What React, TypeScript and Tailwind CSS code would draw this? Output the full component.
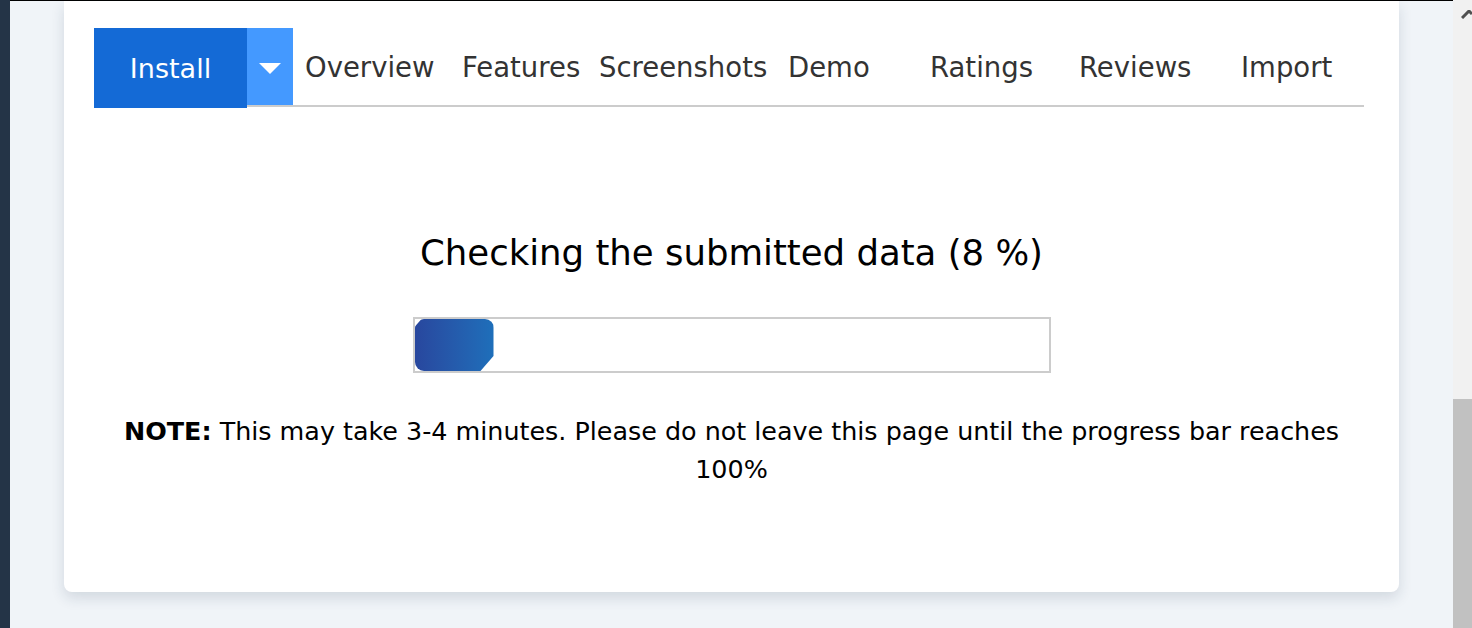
import { useState } from "react";

const tabs = [
  { label: "Overview", w: "w-[157px]" },
  { label: "Features", w: "w-[137px]" },
  { label: "Screenshots", w: "w-[189px]" },
  { label: "Demo", w: "w-[142px]" },
  { label: "Ratings", w: "w-[149px]" },
  { label: "Reviews", w: "w-[162px]" },
  { label: "Import", w: "w-[135px]" },
];

function TabBar() {
  const [active, setActive] = useState("");
  return (
    <div className="flex items-stretch mr-[5px]">
      <button className="w-[153px] h-[80px] bg-[#146ad6] text-white text-[27px] pt-[2px] relative z-10">
        Install
      </button>
      <div className="flex flex-1 border-b-2 border-[#cccccc] h-[79px]">
        <button className="w-[46px] bg-[#4499ff] flex items-center justify-center pt-[4px]">
          <svg width="22" height="11" viewBox="0 0 22 11">
            <path d="M0 0 L22 0 L11 11 Z" fill="#fff" />
          </svg>
        </button>
        {tabs.map((t) => (
          <button
            key={t.label}
            onClick={() => setActive(t.label)}
            className={`${t.w} text-left pl-3 pt-[3px] text-[27.5px] ${active === t.label ? "text-[#146ad6]" : "text-[#333333]"}`}
          >
            {t.label}
          </button>
        ))}
      </div>
    </div>
  );
}

function Progress({ pct }: { pct: number }) {
  // fill is a bit wider than the raw percentage, as in the original widget
  const fill = Math.round(634 * (pct / 100) * 1.56);
  return (
    <div className="w-[638px] h-[56px] border-2 border-[#cccccc] bg-white">
      <div
        className="h-full rounded-[9px] bg-gradient-to-r from-[#28479e] to-[#1e6fba] [clip-path:polygon(0_8px,7px_0,100%_0,100%_calc(100%_-_15px),calc(100%_-_13px)_100%,0_100%)]"
        style={{ width: `${fill}px` }}
      />
    </div>
  );
}

export default function App() {
  return (
    <div className="w-[1472px] h-[628px] flex overflow-hidden font-['DejaVu_Sans',sans-serif]">
      <div className="w-[10px] bg-[#243447]" />
      <div className="flex-1 bg-[#f0f4f8] border-t border-black pl-[54px] pr-[54px]">
        <div className="bg-white rounded-b-lg shadow-[0_6px_14px_rgba(30,50,80,0.14)] h-[591px] pt-[27px] px-[30px]">
          <TabBar />
          <div className="flex flex-col items-center">
            <h2 className="mt-[123px] text-[35.5px] text-black leading-[44px]">
              Checking the submitted data (8 %)
            </h2>
            <div className="mt-[42px]">
              <Progress pct={8} />
            </div>
            <p className="mt-[39px] text-center text-[25.4px] leading-[38px] text-black w-[1240px]">
              <b className="font-bold">NOTE:</b> This may take 3-4 minutes. Please do not leave this page until the progress bar reaches 100%
            </p>
          </div>
        </div>
      </div>
      <div className="w-[19px] bg-[#f1f1f1] flex flex-col">
        <div className="h-[24px] flex items-start justify-end pt-[10px]">
          <svg width="11" height="9" viewBox="0 0 11 9">
            <path d="M1 8 L8 1 L11 4" stroke="#505050" strokeWidth="3" fill="none" />
          </svg>
        </div>
        <div className="flex-1" />
        <div className="h-[229px] bg-[#c1c1c1]" />
      </div>
    </div>
  );
}
